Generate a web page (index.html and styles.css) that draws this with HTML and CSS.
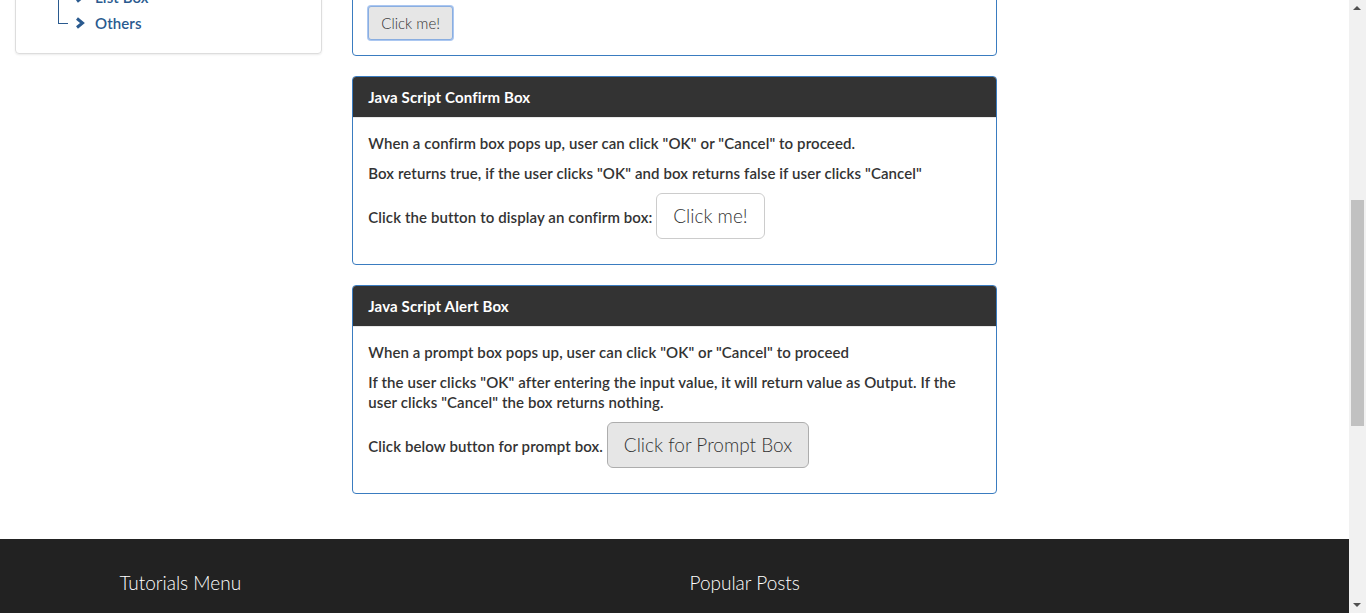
FILE: index.html
```html
<!DOCTYPE html>
<html lang="en">
<head>
<meta charset="utf-8">
<title>Java Script Popup Boxes</title>
<link rel="stylesheet" href="styles.css">
</head>
<body>
<nav class="topbar">
  <div class="topbar-inner">
    <span class="brand">Selenium Easy</span>
    <span class="nav-link">Demo Home</span>
    <span class="nav-link">Input Forms</span>
    <span class="nav-link">Alerts &amp; Modals</span>
  </div>
</nav>

<div class="page">
  <div class="row">
    <aside class="col-side">
      <div class="side-panel">
        <h4 class="side-title">Alerts &amp; Modals</h4>
        <ul class="tree">
          <li><svg class="chev" viewBox="0 0 10 12"><path d="M2 1.5 L7.5 6 L2 10.5"/></svg><span>Bootstrap Alerts</span></li>
          <li><svg class="chev" viewBox="0 0 10 12"><path d="M2 1.5 L7.5 6 L2 10.5"/></svg><span>Bootstrap Modals</span></li>
          <li><svg class="chev" viewBox="0 0 10 12"><path d="M2 1.5 L7.5 6 L2 10.5"/></svg><span>Window Popup Modal</span></li>
          <li><svg class="chev" viewBox="0 0 10 12"><path d="M2 1.5 L7.5 6 L2 10.5"/></svg><span>Progress Bar Modal</span></li>
          <li><svg class="chev" viewBox="0 0 10 12"><path d="M2 1.5 L7.5 6 L2 10.5"/></svg><span>Javascript Alerts</span></li>
          <li><svg class="chev" viewBox="0 0 10 12"><path d="M2 1.5 L7.5 6 L2 10.5"/></svg><span>File Download</span></li>
          <li><svg class="chev" viewBox="0 0 10 12"><path d="M2 1.5 L7.5 6 L2 10.5"/></svg><span>List Box</span></li>
          <li><svg class="chev" viewBox="0 0 10 12"><path d="M2 1.5 L7.5 6 L2 10.5"/></svg><span>Others</span></li>
        </ul>
      </div>
    </aside>

    <main class="col-main">
      <h2 class="page-title">Java Script Alert Box</h2>
      <p class="intro">This page demonstrates the three kinds of Java Script popup boxes: Alert box, Confirm box and Prompt box.</p>

      <section class="card">
        <header class="card-head">Java Script Alert Box</header>
        <div class="card-body">
          <p>When an alert box pops up, the user will have to click "OK" to proceed.</p>
          <p>Click the button to display an alert box:</p>
          <div><button class="btn btn-focus">Click me!</button></div>
        </div>
      </section>

      <section class="card" id="confirm-card">
        <header class="card-head">Java Script Confirm Box</header>
        <div class="card-body">
          <p>When a confirm box pops up, user can click "OK" or "Cancel" to proceed.</p>
          <p>Box returns true, if the user clicks "OK" and box returns false if user clicks "Cancel"</p>
          <p>Click the button to display an confirm box: <button class="btn btn-lg btn-white">Click me!</button></p>
        </div>
      </section>

      <section class="card">
        <header class="card-head">Java Script Alert Box</header>
        <div class="card-body">
          <p>When a prompt box pops up, user can click "OK" or "Cancel" to proceed</p>
          <p>If the user clicks "OK" after entering the input value, it will return value as Output. If the user clicks "Cancel" the box returns nothing.</p>
          <p>Click below button for prompt box. <button class="btn btn-lg btn-gray">Click for Prompt Box</button></p>
        </div>
      </section>
    </main>

    <div class="col-right"></div>
  </div>
</div>

<footer class="footer">
  <div class="footer-inner">
    <div class="footer-col footer-col-left">
      <h4 class="footer-title">Tutorials Menu</h4>
      <ul class="footer-list">
        <li>Selenium Tutorials</li>
        <li>TestNG Tutorials</li>
        <li>WebDriver Examples</li>
        <li>Maven Tutorials</li>
      </ul>
    </div>
    <div class="footer-col">
      <h4 class="footer-title">Popular Posts</h4>
      <ul class="footer-list">
        <li>Handling Alerts in WebDriver</li>
        <li>Working with Frames</li>
        <li>Drag and Drop Examples</li>
        <li>Explicit Waits in WebDriver</li>
      </ul>
    </div>
  </div>
</footer>

<div class="scrollbar" aria-hidden="true">
  <span class="sb-arrow sb-up"></span>
  <span class="sb-thumb"></span>
  <span class="sb-arrow sb-down"></span>
</div>
<script src="script.js"></script>
</body>
</html>
```
FILE: styles.css
```css
body {
  margin: 0 17px 0 0;
  font-family: Lato, "Open Sans", sans-serif;
  font-size: 15px;
  letter-spacing: 0.1px;
  line-height: 20px;
  font-weight: 600;
  color: #333;
  background: #fff;
}
p {
  margin: 0 0 10px;
}
ul {
  margin: 0;
  padding: 0;
  list-style: none;
}

/* top bar */
.topbar {
  height: 50px;
  background: #222;
  color: #9d9d9d;
}
.topbar-inner {
  display: flex;
  align-items: center;
  gap: 30px;
  height: 50px;
  padding: 0 30px;
}
.brand {
  color: #fff;
  font-size: 18px;
}

/* layout */
.page {
  padding: 20px 0 0;
}
.row {
  display: flex;
  align-items: flex-start;
}
.col-side {
  width: 25%;
  padding: 0 15px;
  box-sizing: border-box;
}
.col-main {
  width: 50%;
  padding: 0 15px;
  box-sizing: border-box;
}
.col-right {
  width: 25%;
}

/* sidebar */
.side-panel {
  border: 1px solid #ddd;
  border-radius: 4px;
  box-shadow: 0 1px 2px rgba(0, 0, 0, 0.08);
  padding: 10px 0 17px;
}
.side-title {
  margin: 0 0 8px;
  padding: 0 15px;
  font-size: 16px;
  line-height: 24px;
  color: #333;
}
.tree {
  margin-left: 42px;
  color: #2a5a8f;
}
.tree li {
  position: relative;
  display: flex;
  align-items: center;
  height: 26px;
  padding-left: 17px;
}
.tree li::before {
  content: "";
  position: absolute;
  left: 0;
  top: 0;
  width: 9px;
  height: 13px;
  border-left: 1px solid #2a5a8f;
  border-bottom: 1px solid #2a5a8f;
}
.tree li:not(:last-child)::after {
  content: "";
  position: absolute;
  left: 0;
  top: 13px;
  bottom: 0;
  border-left: 1px solid #2a5a8f;
}
.chev {
  width: 10px;
  height: 12px;
  margin-right: 10px;
  fill: none;
  stroke: #2a5a8f;
  stroke-width: 3;
}

/* main */
.page-title {
  margin: 0 0 12px;
  font-size: 26px;
  line-height: 32px;
  font-weight: 400;
}
.intro {
  margin: 0 0 20px;
}
.card {
  border: 1px solid #3a7cc0;
  border-radius: 4px;
  margin-bottom: 20px;
  overflow: hidden;
}
.card-head {
  background: #333;
  color: #fff;
  padding: 10px 15px;
  font-weight: 700;
  letter-spacing: 0.15px;
  border-bottom: 1px solid #e8e8e8;
}
.card-body {
  padding: 15px;
}

/* buttons */
.btn {
  font-family: Lato, "Open Sans", sans-serif;
  font-weight: 300;
  letter-spacing: 0;
  color: #333;
  border: 1px solid #ccc;
  border-radius: 4px;
  background: #fff;
  cursor: pointer;
}
.btn-focus {
  font-size: 15px;
  line-height: 20px;
  padding: 6px 12px;
  background: #e6e6e6;
  border-color: #8aaee0;
  box-shadow: 0 0 0 1px rgba(102, 153, 230, 0.55);
  border-radius: 3px;
}
.btn-lg {
  font-size: 19px;
  line-height: 24px;
  padding: 10px 16px;
  border-radius: 6px;
}
.btn-white {
  background: #fff;
  border-color: #ccc;
}
.btn-gray {
  background: #e6e6e6;
  border-color: #adadad;
}

/* footer */
.footer {
  margin-top: 25px;
  background: #222;
  height: 535px;
  padding-top: 32px;
  box-sizing: border-box;
  color: #fff;
}
.footer-inner {
  width: 1170px;
  margin: 0 auto;
  display: flex;
}
.footer-col {
  width: 50%;
  padding: 0 15px;
  box-sizing: border-box;
}
.footer-col-left {
  padding-left: 30px;
}
.footer-title {
  margin: 0 0 14px;
  font-size: 19px;
  line-height: 24px;
  font-weight: 300;
  letter-spacing: 0;
}
.footer-list li {
  color: #9d9d9d;
  font-weight: 400;
  line-height: 28px;
  padding-left: 10px;
}

/* window scrollbar, drawn over the right edge */
.scrollbar {
  position: fixed;
  top: 0;
  right: 0;
  width: 17px;
  height: 100%;
  background: #f1f1f1;
}
.sb-thumb {
  position: absolute;
  left: 2px;
  top: 200px;
  width: 13px;
  height: 226px;
  background: #c1c1c1;
}
.sb-arrow {
  position: absolute;
  left: 4px;
  width: 0;
  height: 0;
  border-left: 4px solid transparent;
  border-right: 4px solid transparent;
}
.sb-up {
  top: 6px;
  border-bottom: 4px solid #505050;
}
.sb-down {
  bottom: 6px;
  border-top: 4px solid #505050;
}
```
FILE: script.js
```js
function alignView() {
  var card = document.getElementById('confirm-card');
  var y = card.getBoundingClientRect().top + window.scrollY - 76;
  window.scrollTo(0, y);
}
alignView();
window.addEventListener('load', alignView);
```
